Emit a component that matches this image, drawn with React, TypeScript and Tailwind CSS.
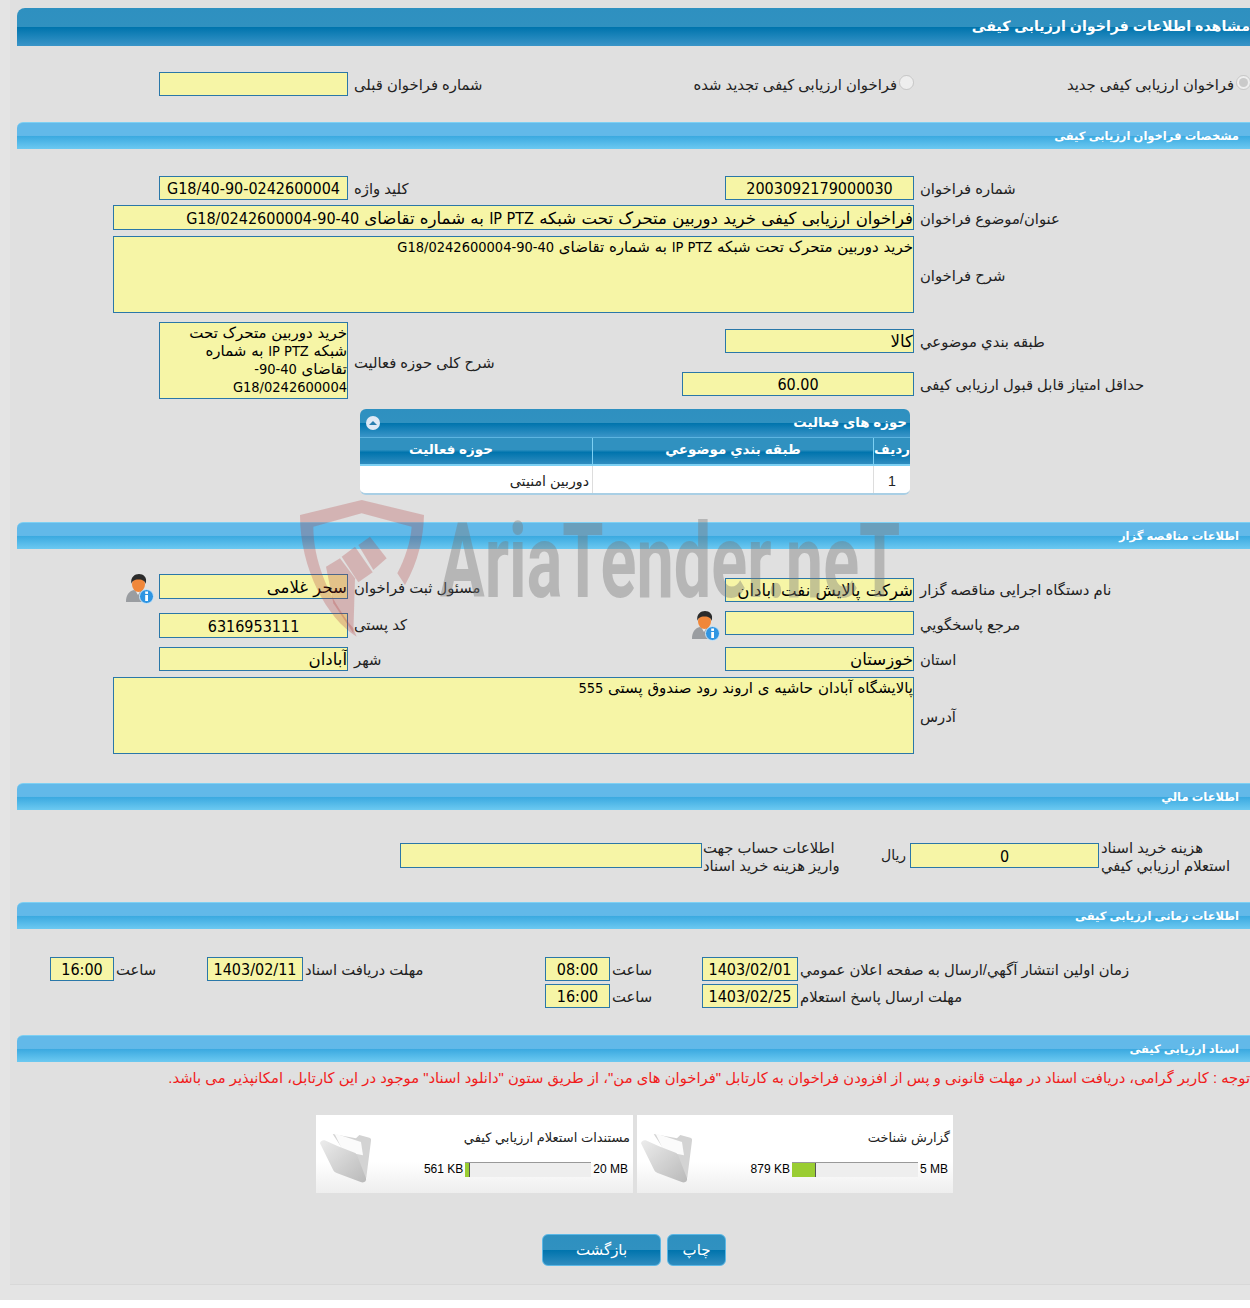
import type { ReactNode } from 'react'

const font = "font-['Liberation_Sans','DejaVu_Sans',sans-serif]"
const latin = "font-['DejaVu_Sans_Condensed','DejaVu_Sans',sans-serif]"
const inputBase = 'border border-[#2a77a8] bg-[#f6f5a6] text-black overflow-hidden shrink-0'

function Bar({ title, big }: { title: string; big?: boolean }) {
  if (big) {
    return (
      <div dir="rtl" className="h-[38px] rounded-tl-[8px] bg-[linear-gradient(#2e90c0_0%,#3091c0_49%,#0074ad_51%,#3a95c8_100%)] text-[14.2px] leading-[37px] font-bold text-white whitespace-nowrap overflow-hidden">
        {title}
      </div>
    )
  }
  return (
    <div dir="rtl" className="h-[27px] rounded-tl-[6px] border-t border-[#7dd0f3] bg-[linear-gradient(#62b9e9_0%,#62b9e9_48%,#3aa9e0_50%,#6cc9f1_100%)] pr-[11px] text-[11.5px] leading-[26px] font-bold text-white whitespace-nowrap">
      {title}
    </div>
  )
}

function Field({ w, h = 24, center, children }: { w: number; h?: number; center?: boolean; children?: ReactNode }) {
  return (
    <div
      dir="rtl"
      style={{ width: w, height: h }}
      className={`${inputBase} ${center ? `text-center text-[16px] ${latin}` : "text-right text-[16.6px] font-['DejaVu_Sans',sans-serif]"} ${h > 24 ? 'leading-[26px]' : 'leading-[24px]'} whitespace-nowrap`}
    >
      {children}
    </div>
  )
}

function Area({ w, h, children }: { w: number; h: number; children?: ReactNode }) {
  return (
    <div dir="rtl" style={{ width: w, height: h }} className={`${inputBase} pt-[1px] text-right font-['DejaVu_Sans',sans-serif] text-[15px] leading-[18px]`}>
      {children}
    </div>
  )
}

function Label({ children, className = '', pad = 'pl-[6px]' }: { children: ReactNode; className?: string; pad?: string }) {
  return (
    <div dir="rtl" className={`${pad} pt-[2px] text-left text-[14.8px] leading-[18px] text-[#222] whitespace-nowrap ${className}`}>
      {children}
    </div>
  )
}

// columns: left input | left label | right input | right label
const cols = 'grid grid-cols-[331px_372px_194px_1fr] items-center'

function PersonIcon() {
  return (
    <svg width="30" height="30" viewBox="0 0 30 30" className="shrink-0">
      <path d="M1 28c0-7 3-11 8-12l4 2 4-2c4 1 7 4 7 12z" fill="#9a9da1" />
      <path d="M10 16l3 5 3-5z" fill="#ececec" />
      <ellipse cx="13.5" cy="10.5" rx="6.5" ry="7.5" fill="#f0873a" />
      <path d="M6.5 10C5 3 10 0 14 0s9 3 6.5 10c-.5-3-2.5-4.5-7-4.5S7 7 6.5 10z" fill="#2b2b2b" />
      <circle cx="21.5" cy="22.5" r="7" fill="#2f95e2" stroke="#cfe6f7" strokeWidth="1" />
      <rect x="20.2" y="21" width="2.8" height="6" fill="#fff" />
      <rect x="20.2" y="17.5" width="2.8" height="2.4" fill="#fff" />
    </svg>
  )
}

function FolderIcon({ id }: { id: string }) {
  return (
    <svg width="70" height="70" viewBox="0 0 210 210" className="shrink-0">
      <defs>
        <linearGradient id={id} x1="0" y1="0" x2="1" y2="1">
          <stop offset="0" stopColor="#ececec" />
          <stop offset="1" stopColor="#b9b9b9" />
        </linearGradient>
      </defs>
      <path d="M50 42l70 13 10-10 30 8c5 2 6 5 5 9l-14 110c-2 6-8 6-14 2z" fill="#d3d3d3" />
      <path d="M55 40l80 26 6 40-60-12z" fill="#fbfbfb" />
      <path d="M12 70c0-6 8-11 14-9l40 18 50 19c4 2 6 5 8 9l26 68c2 8-4 14-14 12l-74-28c-6-2-10-6-12-12z" fill={`url(#${id})`} />
    </svg>
  )
}

function Card({ id, title, used, total, pct, w }: { id: string; title: string; used: string; total: string; pct: number; w: number }) {
  return (
    <div style={{ width: w }} className="flex h-[78px] bg-[linear-gradient(#ffffff_0%,#ffffff_60%,#eeeeee_100%)]">
      <div className="mt-[5px] shrink-0">
        <FolderIcon id={id} />
      </div>
      <div className="min-w-0 flex-1 pr-[3px] pt-[14px]">
        <div dir="rtl" className="text-[13px] leading-[18px] text-[#222] whitespace-nowrap">{title}</div>
        <div className="mt-[15px] flex items-center justify-end gap-[2px] pr-[2px] text-[12px] leading-[15px] text-black whitespace-nowrap">
          <span>{used}</span>
          <div className="h-[15px] w-[126px] border-t border-[#999] bg-[#eeeeee]">
            <div style={{ width: `${pct}%` }} className="h-[14px] border-r border-[#555] bg-[#9acd32]" />
          </div>
          <span>{total}</span>
        </div>
      </div>
    </div>
  )
}

function Btn({ w, children }: { w: number; children: ReactNode }) {
  return (
    <div
      dir="rtl"
      style={{ width: w }}
      className="h-[32px] rounded-[6px] border border-[#5bb8e6] bg-[linear-gradient(#2e90c0_0%,#3091c0_49%,#0074ad_51%,#2f8cbf_100%)] text-center text-[15px] leading-[30px] text-white"
    >
      {children}
    </div>
  )
}

function Watermark() {
  return (
    <>
      <svg width="140" height="145" viewBox="0 0 420 435" className="pointer-events-none absolute left-[280px] top-[495px]">
        <g fill="#b33a3a" fillOpacity="0.27">
          <path d="M30 60L215 15 402 60C400 130 385 200 345 270L322 235C345 190 362 140 365 95L215 55 70 95C70 190 110 300 190 400L200 425C110 370 30 220 30 60Z" />
          <path d="M108 215L150 190 195 250 190 415 130 325Z" />
          <path d="M155 185L195 155 248 232 205 262Z" />
          <path d="M205 150L240 125 290 190 250 225Z" />
        </g>
      </svg>
      <div className="pointer-events-none absolute left-[430px] top-[512px] origin-left scale-x-[0.64] text-[104px] leading-[100px] font-bold text-[#777]/40 whitespace-nowrap font-['Roboto',sans-serif]">
        AriaTender.neT
      </div>
    </>
  )
}

export default function App() {
  return (
    <div className={`h-[1308px] w-full overflow-hidden bg-[linear-gradient(#e4e4e4_0,#e4e4e4_1300px,#ffffff_1300px)] ${font}`}>
      <div className="relative ml-[10px] h-[1285px] overflow-hidden border-b border-[#d8d8d8] bg-[#e0e0e0] pl-[7px] pt-[8px]">
        <Bar big title="مشاهده اطلاعات فراخوان ارزیابی کیفی" />

        {/* نوع فراخوان */}
        <div className="mt-[26px] grid h-[24px] grid-cols-[331px_335px_231px_1fr] items-center">
          <div className="flex justify-end"><Field w={189} /></div>
          <Label>شماره فراخوان قبلی</Label>
          <div className="flex items-center justify-end">
            <Label pad="pl-0">فراخوان ارزیابی کیفی تجدید شده</Label>
            <input type="radio" disabled className="mb-[4px] ml-[2px] h-[15px] w-[15px]" />
          </div>
          <div className="flex items-center justify-end">
            <Label pad="pl-0">فراخوان ارزیابی کیفی جدید</Label>
            <input type="radio" disabled defaultChecked className="mb-[4px] ml-[2px] -mr-[1px] h-[15px] w-[15px]" />
          </div>
        </div>

        <div className="mt-[26px]"><Bar title="مشخصات فراخوان ارزیابی کیفی" /></div>

        <div className={`${cols} mt-[27px]`}>
          <div className="flex justify-end"><Field w={189} center>G18/40-90-0242600004</Field></div>
          <Label>کلید واژه</Label>
          <div className="flex justify-end"><Field w={189} center>2003092179000030</Field></div>
          <Label>شماره فراخوان</Label>
        </div>

        <div className={`${cols} mt-[5px]`}>
          <div className="col-span-3 flex justify-end">
            <Field w={801} h={25}>
              فراخوان ارزیابی کیفی خرید دوربین متحرک تحت شبکه  <span className={`text-[16px] ${latin}`}>IP PTZ</span> به شماره تقاضای <span className={`text-[16px] ${latin}`}>40-90-G18/0242600004</span>
            </Field>
          </div>
          <Label>عنوان/موضوع فراخوان</Label>
        </div>

        <div className={`${cols} mt-[6px]`}>
          <div className="col-span-3 flex justify-end">
            <Area w={801} h={77}>
              خرید دوربین متحرک تحت شبکه  <span className={`text-[14.5px] ${latin}`}>IP PTZ</span> به شماره تقاضای <span className={`text-[14.5px] ${latin}`}>40-90-G18/0242600004</span>
            </Area>
          </div>
          <Label>شرح فراخوان</Label>
        </div>

        <div className={`${cols} mt-[9px] items-start`}>
          <div className="flex justify-end">
            <Area w={189} h={77}>
              خرید دوربین متحرک تحت شبکه  <span className={`text-[14.5px] ${latin}`}>IP PTZ</span> به شماره تقاضای <span className={`text-[14.5px] ${latin}`}>40-90-G18/0242600004</span>
            </Area>
          </div>
          <Label className="mt-[30px]">شرح کلی حوزه فعالیت</Label>
          <div className="col-span-2 flex flex-col">
            <div className="mt-[7px] grid grid-cols-[194px_1fr] items-center">
              <div className="flex justify-end"><Field w={189}>کالا</Field></div>
              <Label>طبقه بندي موضوعي</Label>
            </div>
            <div className="mt-[19px] -ml-[38px] grid grid-cols-[232px_1fr] items-center">
              <Field w={232} center>60.00</Field>
              <Label>حداقل امتیاز قابل قبول ارزیابی کیفی</Label>
            </div>
          </div>
        </div>

        {/* حوزه های فعالیت */}
        <div className="ml-[343px] mt-[10px] w-[550px] overflow-hidden rounded-[6px] border-b-2 border-[#a9cfe5]">
          <div dir="rtl" className="flex h-[28px] items-center justify-between bg-[linear-gradient(#2e90c0_0%,#3091c0_49%,#0074ad_51%,#3a95c8_100%)] pr-[3px] pl-[6px] text-[13.4px] font-semibold text-white">
            <span>حوزه های فعالیت</span>
            <span className="flex h-[14px] w-[14px] items-center justify-center rounded-full bg-[#dfe9f5]">
              <span className="h-0 w-0 border-x-[4px] border-b-[4px] border-x-transparent border-b-[#2a7fb0]" />
            </span>
          </div>
          <div dir="rtl" className="grid h-[29px] grid-cols-[37px_281px_1fr] border-t border-[#5cb4e0] border-b-2 border-b-[#7dd0f3] bg-[linear-gradient(#3091c0_0%,#3091c0_45%,#0074ad_55%,#2f8cbf_100%)] text-center text-[13.5px] leading-[24px] font-semibold text-white">
            <div className="border-l border-[#7dd0f3]">ردیف</div>
            <div className="border-l border-[#7dd0f3]">طبقه بندي موضوعي</div>
            <div className="pr-[50px]">حوزه فعالیت</div>
          </div>
          <div dir="rtl" className="grid h-[27px] grid-cols-[37px_281px_1fr] bg-white text-[14.2px] leading-[30px] text-[#222]">
            <div className="border-l border-[#ddd] text-center">1</div>
            <div className="border-l border-[#ddd]" />
            <div className="pr-[3px]">دوربین امنیتی</div>
          </div>
        </div>

        <div className="mt-[27px]"><Bar title="اطلاعات مناقصه گزار" /></div>

        <div className={`${cols} mt-[25px] items-start`}>
          <div className="flex items-start justify-end gap-[4px]">
            <PersonIcon />
            <Field w={189} h={25}>سحر غلامی</Field>
          </div>
          <Label className="mt-[3px]">مسئول ثبت فراخوان</Label>
          <div className="mt-[4px] flex justify-end"><Field w={189}>شرکت پالایش نفت ابادان</Field></div>
          <Label className="mt-[5px]">نام دستگاه اجرایی مناقصه گزار</Label>
        </div>

        <div className={`${cols} mt-[7px] items-start`}>
          <div className="mt-[2px] flex justify-end"><Field w={189} h={25} center>6316953111</Field></div>
          <Label className="mt-[3px]">کد پستی</Label>
          <div className="flex items-start justify-end gap-[4px]">
            <PersonIcon />
            <Field w={189} />
          </div>
          <Label className="mt-[3px]">مرجع پاسخگویي</Label>
        </div>

        <div className={`${cols} mt-[6px]`}>
          <div className="flex justify-end"><Field w={189}>آبادان</Field></div>
          <Label>شهر</Label>
          <div className="flex justify-end"><Field w={189}>خوزستان</Field></div>
          <Label>استان</Label>
        </div>

        <div className={`${cols} mt-[6px]`}>
          <div className="col-span-3 flex justify-end">
            <Area w={801} h={77}>پالایشگاه آبادان حاشیه ی اروند رود صندوق پستی <span className={`text-[14.5px] ${latin}`}>555</span></Area>
          </div>
          <Label>آدرس</Label>
        </div>

        <div className="mt-[29px]"><Bar title="اطلاعات مالي" /></div>

        <div className="mt-[33px] grid h-[25px] grid-cols-[383px_303px_178px_29px_189px_1fr] grid-rows-[25px] items-center">
          <div />
          <Field w={302} h={25} />
          <div dir="rtl" className="mt-[2px] w-[148px] text-left text-[14.8px] leading-[18px] text-[#222]">اطلاعات حساب جهت واریز هزینه خرید اسناد</div>
          <div dir="rtl" className="text-left text-[14px] text-[#222]">ریال</div>
          <Field w={189} h={25} center>0</Field>
          <div dir="rtl" className="mt-[2px] w-[148px] pl-[2px] text-left text-[14.8px] leading-[18px] text-[#222]">هزینه خرید اسناد استعلام ارزیابي کیفي</div>
        </div>

        <div className="mt-[34px]"><Bar title="اطلاعات زمانی ارزیابی کیفی" /></div>

        <div className="mt-[28px] grid grid-cols-[33px_66px_91px_98px_240px_65px_92px_98px_1fr] items-center">
          <div />
          <Field w={64} center>16:00</Field>
          <Label pad="pl-0">ساعت</Label>
          <Field w={96} center>1403/02/11</Field>
          <Label pad="pl-0">مهلت دریافت اسناد</Label>
          <Field w={65} center>08:00</Field>
          <Label pad="pl-[2px]">ساعت</Label>
          <Field w={96} center>1403/02/01</Field>
          <Label pad="pl-0">زمان اولین انتشار آگهي/ارسال به صفحه اعلان عمومي</Label>
        </div>
        <div className="mt-[3px] grid grid-cols-[528px_65px_92px_98px_1fr] items-center">
          <div />
          <Field w={65} center>16:00</Field>
          <Label pad="pl-[2px]">ساعت</Label>
          <Field w={96} center>1403/02/25</Field>
          <Label pad="pl-0">مهلت ارسال پاسخ استعلام</Label>
        </div>

        <div className="mt-[27px]"><Bar title="اسناد ارزیابی کیفی" /></div>

        <div dir="rtl" className="mt-[7px] text-[14.8px] leading-[18px] text-[#f01c1c] whitespace-nowrap">
          توجه : کاربر گرامی، دریافت اسناد در مهلت قانونی و پس از افزودن فراخوان به کارتابل "فراخوان های من"، از طریق ستون "دانلود اسناد" موجود در این کارتابل، امکانپذیر می باشد.
        </div>

        <div className="mt-[28px] ml-[299px] flex gap-[4px]">
          <Card id="fold1" w={317} title="مستندات استعلام ارزیابي کیفي" used="561 KB" total="20 MB" pct={4} />
          <Card id="fold2" w={316} title="گزارش شناخت" used="879 KB" total="5 MB" pct={19} />
        </div>

        <div className="mt-[41px] ml-[525px] flex gap-[6px]">
          <Btn w={119}>بازگشت</Btn>
          <Btn w={59}>چاپ</Btn>
        </div>

        <Watermark />
      </div>
    </div>
  )
}
